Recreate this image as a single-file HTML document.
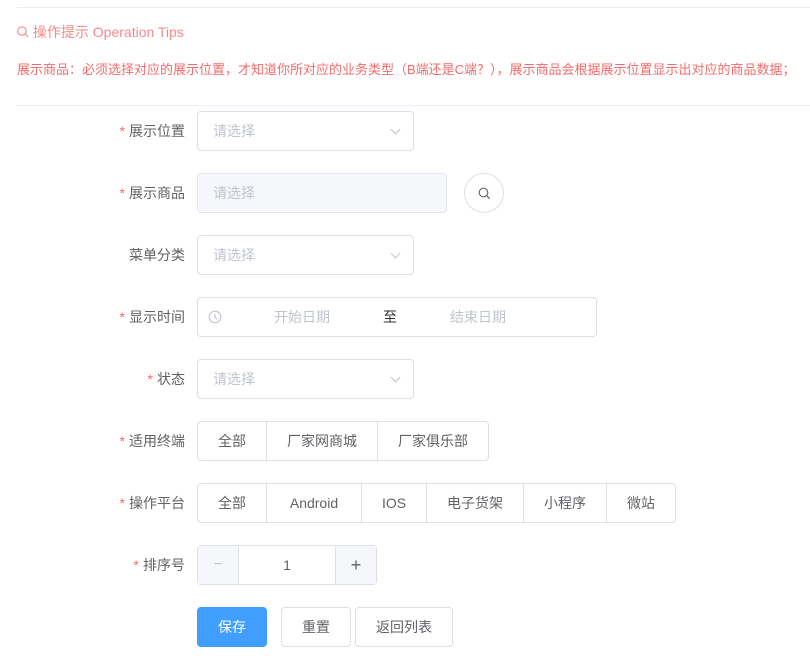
<!DOCTYPE html><html><head><meta charset="utf-8"><style>
*{box-sizing:border-box;margin:0;padding:0}
body{width:810px;height:672px;background:#fff;font-family:"Liberation Sans","Noto Sans CJK SC",sans-serif;font-size:14px;color:#606266;position:relative;overflow:hidden}
.a{position:absolute}
.line{position:absolute;left:17px;right:0;height:1px;background:#ebeef5}
.tip{color:#f56c6c}
.lbl{position:absolute;right:625px;width:120px;text-align:right;line-height:40px}
.lbl i{font-style:normal;color:#f56c6c;margin-right:4px}
.box{position:absolute;height:40px;border:1px solid #dcdfe6;border-radius:4px;line-height:38px;padding-left:15px;color:#c0c4cc}
.grp{position:absolute;height:40px;display:flex}
.grp div{height:40px;border:1px solid #dcdfe6;margin-left:-1px;text-align:center;line-height:38px;color:#606266}
.grp div:first-child{margin-left:0;border-radius:4px 0 0 4px}
.grp div:last-child{border-radius:0 4px 4px 0}
.arrow{position:absolute;right:14px;top:14px;width:7px;height:7px;border-right:1px solid #c0c4cc;border-bottom:1px solid #c0c4cc;transform:rotate(45deg)}
.btn{position:absolute;top:607px;height:40px;border:1px solid #dcdfe6;border-radius:4px;text-align:center;line-height:38px;color:#606266}
</style></head><body>
<div class="line" style="top:7px"></div>
<div class="a tip" style="left:17px;top:23px;line-height:18px;color:#f78989">
<svg width="12" height="12" style="vertical-align:-1px" viewBox="0 0 12 12"><circle cx="5" cy="5" r="4.2" fill="none" stroke="#f78989" stroke-width="1.1"/><path d="M8 8l3 3" stroke="#f78989" stroke-width="1.1"/></svg> 操作提示 Operation Tips</div>
<div class="a tip" style="left:17px;top:61px;line-height:18px;font-size:13px;white-space:nowrap">展示商品：必须选择对应的展示位置，才知道你所对应的业务类型（B端还是C端？），展示商品会根据展示位置显示出对应的商品数据；</div>
<div class="line" style="top:105px"></div>

<div class="lbl" style="top:111px"><i>*</i>展示位置</div>
<div class="box" style="left:197px;top:111px;width:217px">请选择<span class="arrow"></span></div>

<div class="lbl" style="top:173px"><i>*</i>展示商品</div>
<div class="box" style="left:197px;top:173px;width:250px;background:#f5f7fa;border-color:#e4e7ed">请选择</div>
<div class="a" style="left:464px;top:173px;width:40px;height:40px;border:1px solid #dcdfe6;border-radius:50%"><svg class="a" style="left:13px;top:13px" width="13" height="13" viewBox="0 0 13 13"><circle cx="5.5" cy="5.5" r="4.3" fill="none" stroke="#606266" stroke-width="1.1"/><path d="M8.7 8.7l3 3" stroke="#606266" stroke-width="1.1"/></svg></div>

<div class="lbl" style="top:235px">菜单分类</div>
<div class="box" style="left:197px;top:235px;width:217px">请选择<span class="arrow"></span></div>

<div class="lbl" style="top:297px"><i>*</i>显示时间</div>
<div class="box" style="left:197px;top:297px;width:400px;padding:0">
<svg class="a" style="left:10px;top:12px" width="14" height="14" viewBox="0 0 14 14"><circle cx="7" cy="7" r="5.8" fill="none" stroke="#c0c4cc" stroke-width="1.1"/><path d="M7 3.5V7l2 2" fill="none" stroke="#c0c4cc" stroke-width="1.1"/></svg>
<span class="a" style="left:76px">开始日期</span><span class="a" style="left:185px;color:#303133">至</span><span class="a" style="left:252px">结束日期</span></div>

<div class="lbl" style="top:359px"><i>*</i>状态</div>
<div class="box" style="left:197px;top:359px;width:217px">请选择<span class="arrow"></span></div>

<div class="lbl" style="top:421px"><i>*</i>适用终端</div>
<div class="grp" style="left:197px;top:421px"><div style="width:70px">全部</div><div style="width:112px">厂家网商城</div><div style="width:112px">厂家俱乐部</div></div>

<div class="lbl" style="top:483px"><i>*</i>操作平台</div>
<div class="grp" style="left:197px;top:483px"><div style="width:70px">全部</div><div style="width:96px">Android</div><div style="width:66px">IOS</div><div style="width:98px">电子货架</div><div style="width:84px">小程序</div><div style="width:70px">微站</div></div>

<div class="lbl" style="top:545px"><i>*</i>排序号</div>
<div class="a" style="left:197px;top:545px;width:180px;height:40px;border:1px solid #dcdfe6;border-radius:4px;text-align:center;line-height:38px;color:#606266">1
<div class="a" style="left:0;top:0;width:41px;height:38px;background:#f5f7fa;border-right:1px solid #dcdfe6;color:#c0c4cc;font-size:16px">−</div>
<div class="a" style="right:0;top:0;width:41px;height:38px;background:#f5f7fa;border-left:1px solid #dcdfe6;font-size:18px">+</div></div>

<div class="btn" style="left:197px;width:70px;background:#409eff;border-color:#409eff;color:#fff">保存</div>
<div class="btn" style="left:281px;width:70px">重置</div>
<div class="btn" style="left:355px;width:98px">返回列表</div>
</body></html>
